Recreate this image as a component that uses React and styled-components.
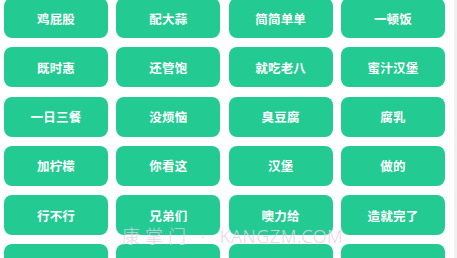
import React from 'react';
import styled, { createGlobalStyle } from 'styled-components';

const GlobalStyle = createGlobalStyle`
  html, body {
    margin: 0;
    padding: 0;
    background: #ffffff;
    overflow: hidden;
  }
  body {
    font-family: "Noto Sans CJK SC", "Noto Sans", sans-serif;
  }
`;

const Page = styled.div`
  position: relative;
  width: 457px;
  height: 258px;
  display: flex;
  overflow: hidden;
`;

const Grid = styled.div`
  display: grid;
  grid-template-columns: repeat(4, 104px);
  grid-auto-rows: 40px;
  column-gap: 8.33px;
  row-gap: 9.3px;
  padding-left: 4px;
  margin-top: -2px;
`;

const Tag = styled.div`
  display: flex;
  align-items: center;
  justify-content: center;
  background: #23cb92;
  border-radius: 8px;
  color: #ffffff;
  font-size: 12.5px;
  font-weight: 700;
  letter-spacing: 0.2px;
`;

const Track = styled.div`
  width: 3px;
  margin-left: auto;
  background: #f1f1f1;
`;

const Watermark = styled.div`
  position: absolute;
  left: 122px;
  top: 222px;
  color: rgba(226, 208, 232, 0.9);
  font-family: "Noto Sans", "Noto Sans CJK SC", sans-serif;
  font-weight: 300;
  font-size: 18px;
  letter-spacing: 5px;
  white-space: nowrap;
  pointer-events: none;
`;

const Latin = styled.span`
  letter-spacing: 0.6px;
`;

// the last row is cut off by the window, its labels are below the fold
const items = [
  '鸡屁股', '配大蒜', '简简单单', '一顿饭',
  '既时惠', '还管饱', '就吃老八', '蜜汁汉堡',
  '一日三餐', '没烦恼', '臭豆腐', '腐乳',
  '加柠檬', '你看这', '汉堡', '做的',
  '行不行', '兄弟们', '噢力给', '造就完了',
  '', '', '', '',
];

export default function App() {
  return (
    <>
      <GlobalStyle />
      <Page>
        <Grid>
          {items.map((t, i) => (
            <Tag key={i}>{t}</Tag>
          ))}
        </Grid>
        <Track />
        <Watermark>
          康掌门 · <Latin>KANGZM.COM</Latin>
        </Watermark>
      </Page>
    </>
  );
}
